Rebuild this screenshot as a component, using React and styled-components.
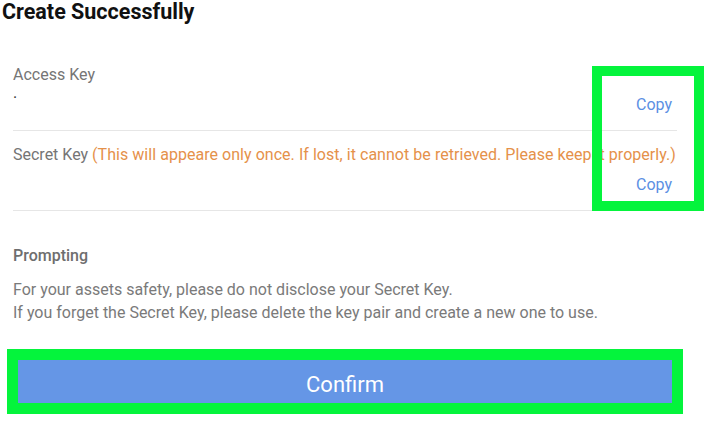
import React from "react";
import styled, { createGlobalStyle } from "styled-components";

const GlobalStyle = createGlobalStyle`
  html, body { margin: 0; padding: 0; background: #ffffff; }
  body { font-family: Roboto, "Noto Sans", "Liberation Sans", sans-serif; }
  * { box-sizing: border-box; }
`;

const Page = styled.div`
  position: relative;
  width: 711px;
  height: 424px;
  overflow: hidden;
  background: #ffffff;
`;

const Title = styled.h1`
  margin: 0;
  padding-left: 2px;
  font-size: 21.5px;
  line-height: 24px;
  font-weight: 700;
  color: #111111;
`;

const Content = styled.div`
  display: flex;
  flex-direction: column;
  margin: 27px 34px 0 13px;
`;

const KeyRow = styled.div`
  display: flex;
  flex-direction: column;
  padding: 14px 0 15px;
  border-bottom: 1px solid #e6e6e6;
`;

const Label = styled.div`
  font-size: 16px;
  line-height: 20px;
  color: #757575;
  white-space: nowrap;
`;

const Warn = styled.span`
  color: #e5914a;
  letter-spacing: 0.04px;
`;

const ValueRow = styled.div`
  display: flex;
  justify-content: space-between;
  align-items: flex-end;
  min-height: 30px;
  padding-right: 5px;
`;

const Value = styled.div`
  align-self: flex-start;
  font-size: 16px;
  line-height: 16px;
  color: #333333;
`;

const CopyLink = styled.span`
  font-size: 16px;
  line-height: 20px;
  color: #5b8fe3;
  cursor: pointer;
`;

const Prompt = styled.div`
  display: flex;
  flex-direction: column;
  margin-top: 35px;
`;

const PromptTitle = styled.div`
  font-size: 16px;
  line-height: 20px;
  font-weight: 500;
  color: #6e6e6e;
  margin-bottom: 12px;
`;

const PromptText = styled.div`
  font-size: 16px;
  line-height: 23px;
  color: #7a7a7a;
`;

const ConfirmButton = styled.button`
  margin-top: 33px;
  height: 56px;
  width: 100%;
  border: none;
  background: #6596e6;
  color: #ffffff;
  font-family: Roboto, "Noto Sans", "Liberation Sans", sans-serif;
  font-size: 22px;
  line-height: 56px;
  padding: 0;
`;

const Highlight = styled.div`
  position: absolute;
  left: ${(p) => p.$x}px;
  top: ${(p) => p.$y}px;
  width: ${(p) => p.$w}px;
  height: ${(p) => p.$h}px;
  border: ${(p) => p.$b}px solid #04f43c;
  pointer-events: none;
`;

export default function App() {
  return (
    <Page>
      <GlobalStyle />
      <Title>Create Successfully</Title>
      <Content>
        <KeyRow>
          <Label>Access Key</Label>
          <ValueRow>
            <Value>.</Value>
            <CopyLink>Copy</CopyLink>
          </ValueRow>
        </KeyRow>
        <KeyRow>
          <Label>
            Secret Key{" "}
            <Warn>
              (This will appeare only once. If lost, it cannot be retrieved. Please keep it properly.)
            </Warn>
          </Label>
          <ValueRow>
            <Value />
            <CopyLink>Copy</CopyLink>
          </ValueRow>
        </KeyRow>
        <Prompt>
          <PromptTitle>Prompting</PromptTitle>
          <PromptText>For your assets safety, please do not disclose your Secret Key.</PromptText>
          <PromptText>
            If you forget the Secret Key, please delete the key pair and create a new one to use.
          </PromptText>
        </Prompt>
        <ConfirmButton>Confirm</ConfirmButton>
      </Content>
      <Highlight $x={592} $y={66} $w={112} $h={145} $b={10} />
      <Highlight $x={7} $y={349} $w={676} $h={65} $b={11} />
    </Page>
  );
}
